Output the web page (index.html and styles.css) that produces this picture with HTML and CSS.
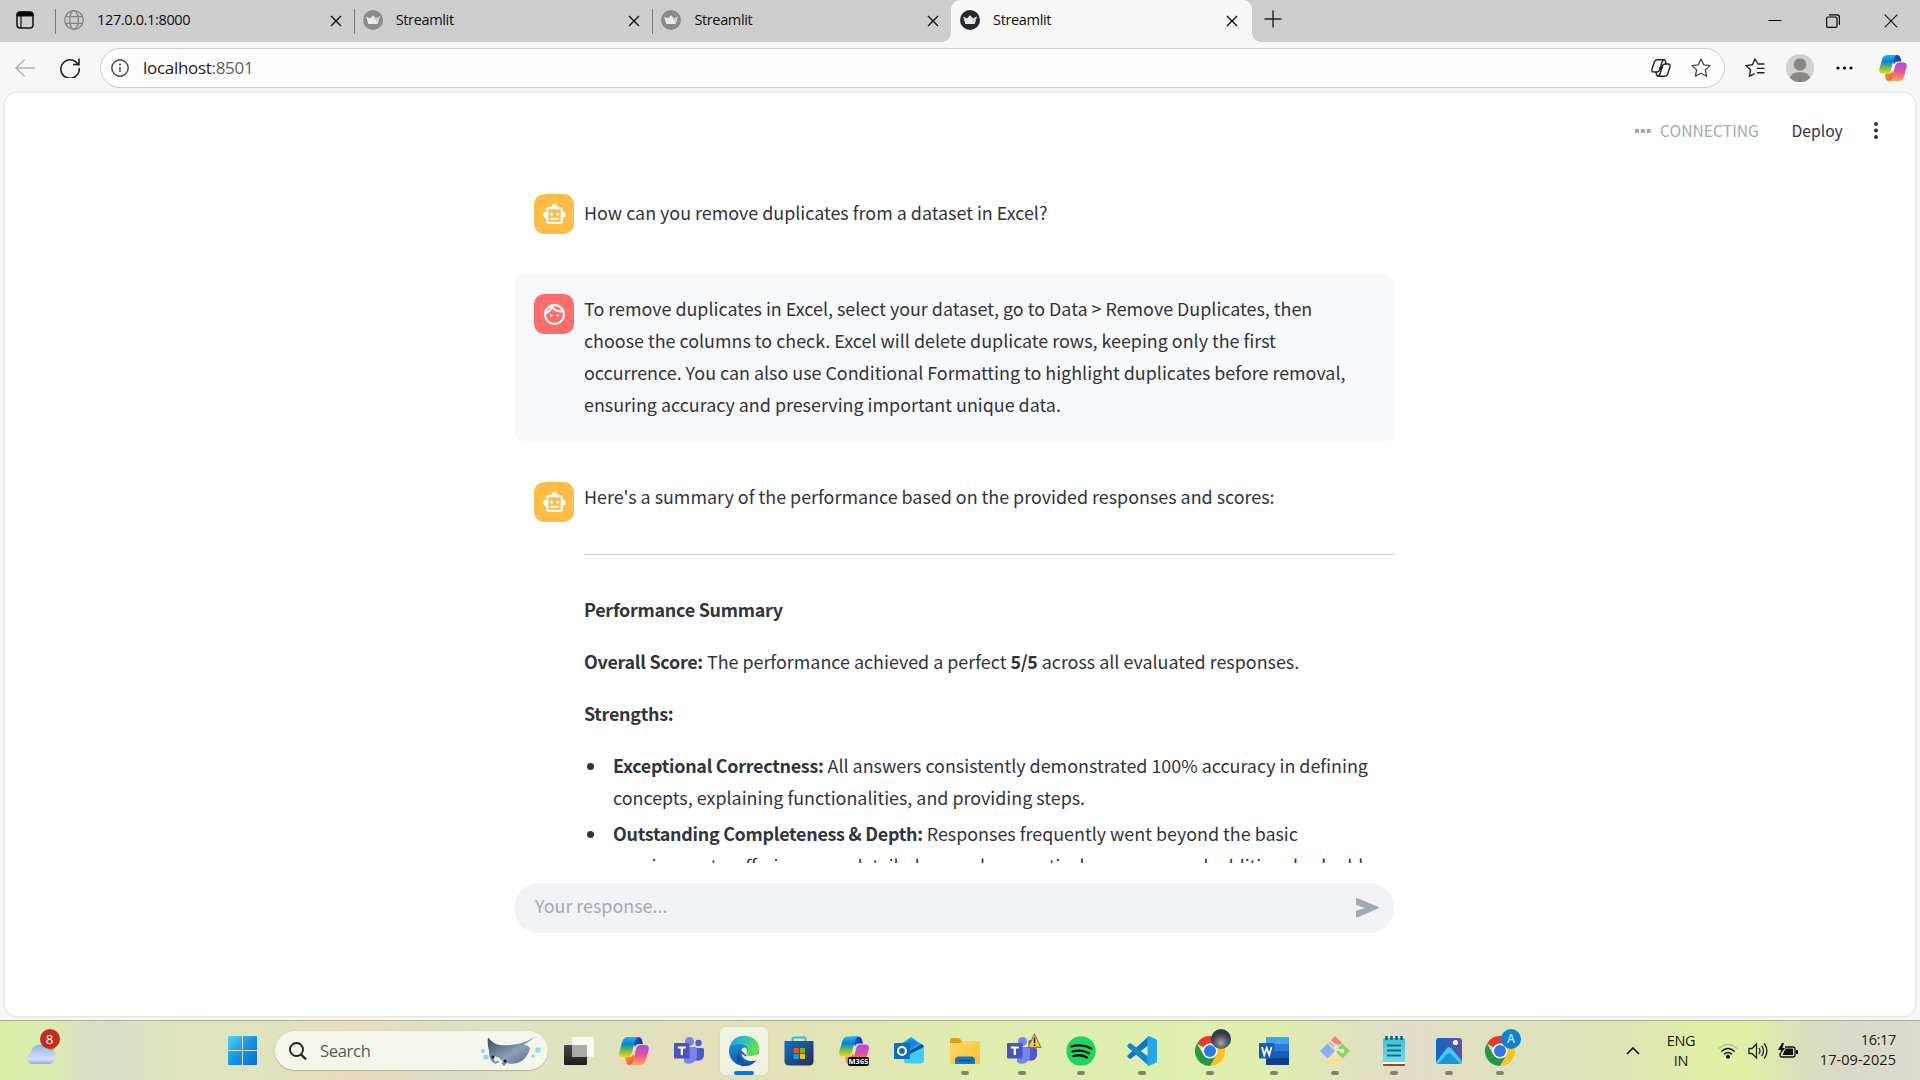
FILE: index.html
```html
<!DOCTYPE html>
<html lang="en">
<head>
<meta charset="utf-8">
<title>Streamlit</title>
<link rel="stylesheet" href="styles.css">
</head>
<body>
<svg class="defs" width="0" height="0">
  <defs>
    <linearGradient id="cpA" x1="0" y1="0" x2="0" y2="1"><stop offset="0" stop-color="#1fb5f5"/><stop offset=".35" stop-color="#0a7fd8"/><stop offset=".68" stop-color="#6fbf4a"/><stop offset="1" stop-color="#f9d11b"/></linearGradient>
    <linearGradient id="cpB" x1="0" y1="0" x2="0" y2="1"><stop offset="0" stop-color="#a34df0"/><stop offset=".5" stop-color="#ee5095"/><stop offset="1" stop-color="#ffa65c"/></linearGradient>
    <linearGradient id="cpC" x1="0" y1="0" x2="1" y2="0"><stop offset="0" stop-color="#0f6fe0"/><stop offset="1" stop-color="#1630b8"/></linearGradient>
    <linearGradient id="cpD" x1="0" y1="0" x2="1" y2="1"><stop offset="0" stop-color="#ffb02e"/><stop offset="1" stop-color="#e23a3a"/></linearGradient>
    <linearGradient id="win" x1="0" y1="0" x2="1" y2="1"><stop offset="0" stop-color="#4fd4ff"/><stop offset=".5" stop-color="#1593e6"/><stop offset="1" stop-color="#0070d2"/></linearGradient>
    <linearGradient id="edgeA" x1="0" y1="0" x2="1" y2=".5"><stop offset="0" stop-color="#2196dc"/><stop offset=".45" stop-color="#2ac0c8"/><stop offset="1" stop-color="#69e33c"/></linearGradient>
    <linearGradient id="edgeB" x1="0" y1="0" x2="0" y2="1"><stop offset="0" stop-color="#1f9de2"/><stop offset="1" stop-color="#0c5cb0"/></linearGradient>
    <linearGradient id="store" x1="0" y1="0" x2="1" y2="1"><stop offset="0" stop-color="#0b72c5"/><stop offset="1" stop-color="#2a2c57"/></linearGradient>
    <linearGradient id="folder" x1="0" y1="0" x2="1" y2="1"><stop offset="0" stop-color="#ffd96a"/><stop offset="1" stop-color="#ffc02a"/></linearGradient>
    <linearGradient id="cloud" x1="0" y1="0" x2="0" y2="1"><stop offset="0" stop-color="#8fb2ef"/><stop offset=".75" stop-color="#d3e1fa"/><stop offset="1" stop-color="#8cabe8"/></linearGradient>
    <linearGradient id="photo" x1="0" y1="0" x2="1" y2="0"><stop offset="0" stop-color="#0f67c2"/><stop offset="1" stop-color="#6050ab"/></linearGradient>
    <linearGradient id="note" x1="0" y1="0" x2="0" y2="1"><stop offset="0" stop-color="#42bfd8"/><stop offset="1" stop-color="#78dcec"/></linearGradient>
    <linearGradient id="ray" x1="0" y1="0" x2="1" y2="1"><stop offset="0" stop-color="#33455f"/><stop offset=".55" stop-color="#8ba1b3"/><stop offset="1" stop-color="#4c5280"/></linearGradient>
    <radialGradient id="user" cx=".5" cy=".7"><stop offset="0" stop-color="#b7a698"/><stop offset=".45" stop-color="#6b6d70"/><stop offset="1" stop-color="#2d3c4c"/></radialGradient>
    <linearGradient id="dark" x1="0" y1="0" x2="0" y2="1"><stop offset="0" stop-color="#4a4a48"/><stop offset="1" stop-color="#1d1d1c"/></linearGradient>
  </defs>
  <symbol id="copilot" viewBox="0 0 30 28">
    <path d="M12 0h7.500q2.500 0 3.300 2.500L24 7h-4q-3 0-4 3z" fill="url(#cpC)"/>
    <path d="M18 28h-7.500q-2.500 0-3.300-2.500L6 20h4q3 0 4-3z" fill="url(#cpD)"/>
    <path d="M9 0h11q-3 .3-4 4l-3.500 13q-1 3-4 3H4Q-1 20 .4 14.500L3.500 4Q5 0 9 0z" fill="url(#cpA)"/>
    <path d="M21 28H10q3-.3 4-4l3.500-13q1-3 4-3H26q5 0 3.600 5.500L26.500 24Q25 28 21 28z" fill="url(#cpB)"/>
  </symbol>
  <symbol id="teams" viewBox="0 0 30 28">
    <circle cx="24.500" cy="6" r="3.200" fill="#5059c9"/><path d="M20 11h8.500q1.500 0 1.500 1.500V18a6 6 0 0 1-9 5z" fill="#5059c9"/>
    <circle cx="15.500" cy="4.500" r="4.500" fill="#7b83eb"/><path d="M10 10h11.500q1.500 0 1.500 1.500V19a8 8 0 0 1-13 6z" fill="#7b83eb"/>
    <rect y="6" width="15.500" height="15.500" rx="1" fill="#4b53bc"/><path d="M3.800 9.500h8v2H9V18H6.700v-6.500H3.800z" fill="#fff"/>
  </symbol>
  <symbol id="chrome" viewBox="0 0 30 30">
    <path d="M15 15 2 7.500A15 15 0 0 1 28 7.500z" fill="#e33b2e"/><path d="M15 7.500h13A15 15 0 0 1 15 30l6.500-11z" fill="#fcc31e"/>
    <path d="M2 7.500A15 15 0 0 0 15 30l6.500-11.200L15 22l-6.500-3.200z" fill="#2a9747"/>
    <circle cx="15" cy="15" r="7.600" fill="#fff"/><circle cx="15" cy="15" r="6" fill="#2f76e8"/>
  </symbol>
  <symbol id="bot" viewBox="0 0 24 24"><path fill="#fff" fill-rule="evenodd" d="M20 9V7c0-1.100-.9-2-2-2h-3c0-1.660-1.340-3-3-3S9 3.340 9 5H6c-1.100 0-2 .9-2 2v2c-1.660 0-3 1.340-3 3s1.340 3 3 3v4c0 1.100.9 2 2 2h12c1.100 0 2-.9 2-2v-4c1.660 0 3-1.340 3-3s-1.340-3-3-3zm-2 10H6V7h12v12zM7.500 11.500a1.500 1.500 0 1 0 3 0a1.500 1.500 0 1 0-3 0zM13.500 11.500a1.500 1.500 0 1 0 3 0a1.500 1.500 0 1 0-3 0zM8 15h8v2H8z"/></symbol>
  <symbol id="crown" viewBox="0 0 20 20"><circle cx="10" cy="10" r="10"/><path d="M3.200 6.500 7 8.500l3-3.300 3 3.300 3.800-2L14.700 14H5.300z" fill="#e9e9e9"/><path d="m10 5.200 3 3.300 3.800-2L14.700 14z" fill="#cfcfcf"/></symbol>
  <symbol id="x" viewBox="0 0 12 12"><path d="m1 1 10 10M11 1 1 11" fill="none" stroke="#111" stroke-width="1.400"/></symbol>
</svg>

<header class="tabbar">
  <svg class="tab-actions" viewBox="0 0 18 18"><rect x="1" y="1" width="16" height="16" rx="3" fill="none" stroke="#111" stroke-width="1.500"/><path d="M1 5V4q0-3 3-3h10q3 0 3 3v1z" stroke="#111"/><path d="M5 5v12" stroke="#111" stroke-width="1.200"/></svg>
  <div class="tab">
    <svg class="favicon globe" viewBox="0 0 20 20"><circle cx="10" cy="10" r="9.300"/><ellipse cx="10" cy="10" rx="4.300" ry="9.300"/><path d="M1.500 6.700h17M1.500 13.300h17"/></svg>
    <span class="tab-title">127.0.0.1:8000</span><svg class="tab-x"><use href="#x"/></svg>
  </div>
  <div class="tab"><svg class="favicon faded"><use href="#crown"/></svg><span class="tab-title">Streamlit</span><svg class="tab-x"><use href="#x"/></svg></div>
  <div class="tab"><svg class="favicon faded"><use href="#crown"/></svg><span class="tab-title">Streamlit</span><svg class="tab-x"><use href="#x"/></svg></div>
  <div class="tab active"><svg class="favicon"><use href="#crown"/></svg><span class="tab-title">Streamlit</span><svg class="tab-x"><use href="#x"/></svg></div>
  <svg class="new-tab" viewBox="0 0 18 18"><path d="M9 .5v17M.5 9h17" stroke="#222" stroke-width="1.400"/></svg>
  <div class="window-buttons">
    <svg viewBox="0 0 14 14"><path d="M.5 6.500h13" stroke="#000"/></svg>
    <svg viewBox="0 0 14 14" fill="none" stroke="#000" stroke-width="1.200"><rect x=".6" y="3" width="10.400" height="10.400" rx="1.500"/><path d="M3 .8h8q2.400 0 2.400 2.400v7.500"/></svg>
    <svg viewBox="0 0 14 14"><path d="m.7.7 12.600 12.600M13.300.7.7 13.300" stroke="#111" stroke-width="1.100"/></svg>
  </div>
</header>

<nav class="toolbar">
  <svg class="back" viewBox="0 0 20 18" fill="none" stroke="#b5b5b5" stroke-width="1.400"><path d="M20 9H1M9.500.8 1 9l8.500 8.200"/></svg>
  <svg class="reload" viewBox="0 0 20 20" fill="none" stroke="#222" stroke-width="1.600"><path d="M18.600 7.600A9.200 9.200 0 1 0 19.200 10M19 .5v6h-6"/></svg>
  <div class="address">
    <svg class="info" viewBox="0 0 18 18"><circle cx="9" cy="9" r="8.200" fill="none" stroke="#444" stroke-width="1.400"/><path d="M9 8v5" stroke="#444" stroke-width="1.400"/><circle cx="9" cy="5.500" r="1" fill="#444"/></svg>
    <span class="url">localhost<span class="port">:8501</span></span>
    <svg class="split" viewBox="0 0 20 18" fill="none" stroke="#222" stroke-width="1.400"><path d="M6 .8h6.500q1.600 0 2 1.700l.6 2.500M14 17.200H7.500q-1.600 0-2-1.700L5 13M6 .8Q4 .8 3.300 3L1 10.300Q.3 13 3 13h3q2 0 2.700-2.300L11 3q.6-2.200 2.500-2.200M14 17.200q2 0 2.700-2.200L19 7.700Q19.700 5 17 5h-3q-2 0-2.700 2.300L9 15q-.6 2.200-2.500 2.200M8 8.800h4"/></svg>
    <svg class="star" viewBox="0 0 20 20" fill="none" stroke="#444" stroke-width="1.300" stroke-linejoin="round"><path d="m10 1 2.700 5.800 6.300.8-4.600 4.300 1.200 6.400L10 15.200l-5.600 3.100 1.200-6.400L1 7.600l6.300-.8z"/></svg>
  </div>
  <svg class="favs" viewBox="0 0 20 20" fill="none" stroke="#222" stroke-width="1.400" stroke-linejoin="round" stroke-linecap="round"><path d="M19 6h-6L10 1 7.400 6.800 1 7.600l4.600 4.300-1.200 6.400L9 15.800M12.500 10.400H19M12.500 14.800H19"/></svg>
  <svg class="profile" viewBox="0 0 28 28"><circle cx="14" cy="14" r="14" fill="#d2d0ce"/><circle cx="14" cy="10.500" r="6.200" fill="#8a8684"/><path d="M4 24q1-6 10-6t10 6a14 14 0 0 1-20 0z" fill="#8a8684"/></svg>
  <svg class="more" viewBox="0 0 17 4"><circle cx="2" cy="2" r="1.600"/><circle cx="8.500" cy="2" r="1.600"/><circle cx="15" cy="2" r="1.600"/></svg>
  <svg class="sidebar-copilot"><use href="#copilot"/></svg>
</nav>

<main class="page">
  <div class="status">
    <svg class="squares" viewBox="0 0 16 4"><path d="M0 0h4v4H0zM5.800 0h4v4h-4zM11.600 0h4v4h-4z" fill="#a3a8b8"/></svg>
    <span class="connecting">CONNECTING</span>
    <span class="deploy">Deploy</span>
    <svg class="kebab" viewBox="0 0 4 17" fill="#31333f"><circle cx="2" cy="2" r="2"/><circle cx="2" cy="8.500" r="2"/><circle cx="2" cy="15" r="2"/></svg>
  </div>
  <section class="chat">
    <article class="message centered">
      <div class="avatar bot"><svg><use href="#bot"/></svg></div>
      <p>How can you remove duplicates from a dataset in Excel?</p>
    </article>
    <article class="message user">
      <div class="avatar face"><svg viewBox="0 0 24 24" fill="#fff" fill-rule="evenodd"><path d="M10.250 13c0 .69-.56 1.250-1.250 1.250S7.750 13.690 7.750 13s.56-1.250 1.250-1.250 1.250.56 1.250 1.250zM15 11.750c-.69 0-1.250.56-1.250 1.250s.56 1.250 1.250 1.250 1.250-.56 1.250-1.250-.56-1.250-1.250-1.250zm7 .25c0 5.520-4.480 10-10 10S2 17.520 2 12 6.480 2 12 2s10 4.480 10 10zM10.660 4.120C12.060 6.440 14.600 8 17.500 8c.46 0 .91-.05 1.340-.12C17.440 5.560 14.900 4 12 4c-.46 0-.91.05-1.340.12zM4.420 9.470c1.710-.97 3.030-2.550 3.660-4.440C6.370 6 5.050 7.580 4.420 9.470zM20 12c0-.78-.12-1.530-.33-2.240-.7.15-1.420.24-2.170.24-3.130 0-5.920-1.440-7.760-3.690C8.690 8.870 6.600 10.880 4 11.860c.01.04 0 .09 0 .14 0 4.420 3.580 8 8 8s8-3.580 8-8z"/></svg></div>
      <p>To remove duplicates in Excel, select your dataset, go to Data &gt; Remove Duplicates, then<br>choose the columns to check. Excel will delete duplicate rows, keeping only the first<br>occurrence. You can also use Conditional Formatting to highlight duplicates before removal,<br>ensuring accuracy and preserving important unique data.</p>
    </article>
    <article class="message summary">
      <div class="avatar bot"><svg><use href="#bot"/></svg></div>
      <div class="answer">
        <p>Here's a summary of the performance based on the provided responses and scores:</p>
        <hr>
        <p><b>Performance Summary</b></p>
        <p><b>Overall Score:</b> The performance achieved a perfect <b>5/5</b> across all evaluated responses.</p>
        <p><b>Strengths:</b></p>
        <ul>
          <li><b>Exceptional Correctness:</b> All answers consistently demonstrated 100% accuracy in defining<br>concepts, explaining functionalities, and providing steps.</li>
          <li><b>Outstanding Completeness &amp; Depth:</b> Responses frequently went beyond the basic<br>requirements, offering more detailed examples, practical use cases, and additional valuable</li>
        </ul>
      </div>
    </article>
  </section>
  <div class="chat-input">
    <span>Your response...</span>
    <svg viewBox="0 0 23 20"><path d="M1.600.3 22 8.800q1.600.9 0 1.800L1.600 19.500Q0 20 0 18.300v-5.500l9-2.900L0 7V1.500Q0-.3 1.600.3z" fill="#a3a8b8"/></svg>
  </div>
</main>

<footer class="taskbar">
  <div class="weather">
    <svg viewBox="0 0 30 30"><circle cx="22" cy="13" r="6.500" fill="#ff8a1e"/><path d="M6 30a6 6 0 0 1-1-11.500 9 9 0 0 1 17-3A7.200 7.200 0 0 1 23.500 30z" fill="url(#cloud)"/></svg>
    <span class="badge">8</span>
  </div>
  <svg class="start" viewBox="0 0 29 29"><path d="M1 0h13v14H0V1q0-1 1-1zM15 0h13q1 0 1 1v13H15zM0 15h14v14H1q-1 0-1-1zM15 15h14v13q0 1-1 1H15z" fill="url(#win)"/></svg>
  <div class="search">
    <svg class="lens" viewBox="0 0 18 18"><circle cx="7.500" cy="7.500" r="6.500" fill="none" stroke="#222" stroke-width="1.900"/><path d="m12 12.500 5 4.800" stroke="#222" stroke-width="2.300"/></svg>
    <span>Search</span>
    <svg class="manta" viewBox="0 0 60 30"><g fill="#8fd6f5"><circle cx="2" cy="15" r="2"/><circle cx="5" cy="21" r="2.600"/><circle cx="57" cy="14" r="2.800"/><circle cx="52" cy="20" r="1.800"/></g><path d="M7 1.500q5 6.500 12 7.500 9 1 17-1 10-1.500 18.500-8-6 6-11.500 8.500 4 .5 6 4-3 10-10 13.500-6 3-13 1l-3 3-4-4-5 2q-6-3-6-13-2-8-1-13.500z" fill="url(#ray)"/><path d="M12 20q6 0 10 6l-3 2-2-4-3 2z" fill="#e7edf0"/><circle cx="12" cy="21" r="1.500" fill="#10182a"/><circle cx="24" cy="25" r="1.500" fill="#10182a"/></svg>
  </div>
  <div class="apps">
    <div class="app"><svg viewBox="0 0 30 28"><rect y="8" width="23" height="20" rx="1" fill="url(#dark)"/><rect x="8" y="0" width="22" height="20" rx="1" fill="#fff" opacity=".82"/><path d="M8 8h15v12H8z" fill="#aaa"/></svg></div>
    <div class="app"><svg><use href="#copilot"/></svg></div>
    <div class="app"><svg><use href="#teams"/></svg></div>
    <div class="app current"><svg viewBox="0 0 30 30"><circle cx="15" cy="15" r="15" fill="url(#edgeB)"/><path d="M.7 11Q4 0 15 0q15 1 15 13 0 7-9 7-4 0-3-3 2-6-3-8Q7 6 .7 11z" fill="url(#edgeA)"/><path d="M11 13q-4 14 16 11.500Q22 31 13 30 3 24 11 13z" fill="#1155a3"/><path d="M12 15q1-4 4-3.500 3 1 1.800 5-.8 3.500 4.200 3.500 4 0 8.300-3-1 6-4 8Q12 26 12 15z" fill="#eeefdf"/><path d="M18.500 20.500q-5-1-6.500-4 .5 9 10 9 3.500 0 5.500-1.500l-1.500 2q-6 3-11 0-6-4-3-12z" fill="#0f65b8"/></svg></div>
    <div class="app"><svg viewBox="0 0 30 30"><path d="M8.500 7V3.500Q8.500 1.500 10 1.500h10q1.500 0 1.500 2V7" fill="none" stroke="#26bfe9" stroke-width="2"/><path d="M.5 5h29v20q0 4.500-4.500 4.500H5Q.5 29.500.5 25z" fill="url(#store)"/><path d="M9.500 12H15v5H9.500z" fill="#f25022"/><path d="M16 12h5v5h-5z" fill="#7fba00"/><path d="M9.500 18H15v5H9.500z" fill="#00a4ef"/><path d="M16 18h5v5h-5z" fill="#ffb900"/></svg></div>
    <div class="app"><svg><use href="#copilot"/></svg><span class="m365">M365</span></div>
    <div class="app"><svg viewBox="0 0 30 28"><path d="m4 9 13-9 13 9-4 8H6z" fill="#1da0e8"/><path d="M8 8 18 2l6 4-12 9z" fill="#1583d8"/><path d="m12 16 16-9 2 3-8 8z" fill="#0b4f9e"/><path d="m30 10v13q0 3.500-3.500 3.500H13q-3 0-3-3V20z" fill="#3fcdf5"/><rect y="6" width="16" height="16" rx="1" fill="#0f6cc0"/><circle cx="8" cy="14" r="4" fill="none" stroke="#fff" stroke-width="2.200"/></svg></div>
    <div class="app open"><svg viewBox="0 0 30 28"><path d="M0 2.500Q0 1 1.500 1H9l3 3v5H0z" fill="#e4a00e"/><path d="M1.500 6H10l3-2h15.500Q30 4 30 5.500V27H0V7q0-1 1.500-1z" fill="url(#folder)"/><path d="M5 27v-4q0-3.500 3.500-3.500h13q3.500 0 3.500 3.500v4z" fill="#1277cd"/><path d="M8.500 23.500h13" stroke="#07539a" stroke-width="1.500"/></svg></div>
    <div class="app open"><svg><use href="#teams"/></svg><svg class="warn" viewBox="0 0 14 15"><path d="m7 1 6 12.500H1z" fill="#ffd42e" stroke="#807848" stroke-linejoin="round"/><path d="M7 4.500v5M7 10.500v1.700" stroke="#222" stroke-width="1.500"/></svg></div>
    <div class="app open"><svg viewBox="0 0 30 30"><circle cx="15" cy="15" r="14.700" fill="#1ed760"/><path d="M5.500 10.500q10-3 20 2M6.500 15.500q9-2.500 16.500 1.700M7.500 20q7.500-2 13.500 1.500" fill="none" stroke="#111" stroke-width="2.300" stroke-linecap="round"/></svg></div>
    <div class="app open"><svg viewBox="0 0 30 30"><path d="M22 0 1 19l-1 1.200L2 22.500l1.800.2L23 8z" fill="#0f76bc"/><path d="M22 30 1 11.500l-1-1.800L2 7.500l1.800-.2L23 22z" fill="#1488cd"/><path d="m22 0 7 3.300q1 .5 1 1.700v20q0 1.200-1 1.700L22 30q-1 0-1.500-1V1q.5-1 1.500-1z" fill="#24a7f1"/></svg></div>
    <div class="app open"><svg><use href="#chrome"/></svg><svg class="user" viewBox="0 0 20 20"><circle cx="10" cy="10" r="10" fill="url(#user)"/></svg></div>
    <div class="app open"><svg viewBox="0 0 30 28"><rect x="7" width="23" height="28" rx="1.500" fill="#2b7cd3"/><path d="M7 0h23v7H7z" fill="#41a5ee"/><path d="M7 14h23v7H7z" fill="#185abd"/><path d="M7 21h23v7H7z" fill="#103f91"/><rect y="6" width="15.500" height="15.500" rx="1" fill="#185abd"/><path d="m3 10 2.200 8 2.500-7 2.500 7L12.500 10" fill="none" stroke="#fff" stroke-width="1.800"/></svg></div>
    <div class="app open"><svg viewBox="0 0 30 30"><path d="m15 0 7 7-7 5-6.500-5.500z" fill="#f98080"/><path d="m0 15 7.500-7.500L15 15l-7.500 7.500z" fill="#80b0ff"/><path d="m22.500 7.500 7.500 7.500-7.500 7.500L15 15z" fill="#8cd360"/><path d="m15 16 7 6.500-7 7.500-7-7z" fill="#ffe07c"/><path d="m9 4 7 6v12m0-9 6 2" fill="none" stroke="#e8e6d5" stroke-width="2"/><circle cx="16" cy="10" r="2.300" fill="#e8e6d5"/><circle cx="16" cy="21" r="2.300" fill="#e8e6d5"/><circle cx="22" cy="15" r="2.300" fill="#e8e6d5"/></svg></div>
    <div class="app open"><svg viewBox="0 0 30 30"><rect x="4" y="2" width="22" height="26" rx="1.500" fill="url(#note)"/><path d="M4 26h22v3q0 1-1 1H5q-1 0-1-1z" fill="#fff"/><path d="M4 28h22v1q0 1-1 1H5q-1 0-1-1z" fill="#a14a08"/><path d="M7.500 0v4M12.500 0v4M17.500 0v4M22.500 0v4" stroke="#175d70" stroke-width="2.500"/><path d="M8 9.500h14M8 14.500h14M8 19.500h14" stroke="#0b718c" stroke-width="1.800"/></svg></div>
    <div class="app open"><svg viewBox="0 0 30 30"><rect x="2" y="2" width="26" height="26" rx="3" fill="url(#photo)"/><path d="m2 26 11-14q2-2 4 0l11 13q0 3-3 3H5q-2 0-3-2z" fill="#42caf4"/><path d="m4 28 9-10q2-2 4 0l9 9.500-1 .5z" fill="#1597dd"/><circle cx="21.500" cy="6.500" r="2.600" fill="#fff"/></svg></div>
    <div class="app open"><svg><use href="#chrome"/></svg><span class="user initial">A</span></div>
  </div>
  <div class="tray">
    <svg class="chevron" viewBox="0 0 14 8"><path d="m1 7 6-6 6 6" fill="none" stroke="#111" stroke-width="1.600"/></svg>
    <div class="lang">ENG<br>IN</div>
    <svg class="wifi" viewBox="0 0 20 16" fill="none" stroke="#111" stroke-width="1.500"><path d="M1 5.500q9-8 18 0" stroke="#b3bc8b"/><path d="M3.300 8.500q6.700-6 13.400 0M6 11.300q4-3.500 8 0"/><circle cx="10" cy="13.800" r="1.300" fill="#111"/></svg>
    <svg class="volume" viewBox="0 0 20 18" fill="none" stroke="#222" stroke-width="1.300"><path d="M1 6.500h3L8.500 2v14L4 11.500H1zM11 6q2 3 0 6M13.700 3.800q3.600 5.200 0 10.400M16.200 1.500q5.400 7.500 0 15"/></svg>
    <svg class="battery" viewBox="0 0 20 18"><path d="M7 5h8q2 0 2 2v6q0 2-2 2H4q-2 0-2-2v-2" fill="none" stroke="#111" stroke-width="1.300"/><path d="M7.500 6.500H15V13H4.500zM18 8h2v4h-2zM4 1 0 8h3l-1 5 5-7H4.500L6 1z" fill="#111"/></svg>
    <div class="clock">16:17<br><span class="date">17-09-2025</span></div>
  </div>
</footer>
</body>
</html>
```
FILE: styles.css
```css
* { box-sizing: border-box; }
body {
  margin: 0; width: 1920px; height: 1080px; overflow: hidden;
  display: flex; flex-direction: column; background: #f7f7f7;
  font-family: "Open Sans", "Noto Sans", sans-serif; color: #111;
}
svg { display: block; flex: none; }
.defs { position: absolute; }
p, ul { margin: 0; padding: 0; }

/* Browser tabs */
.tabbar { height: 42px; flex: none; display: flex; align-items: center; background: #cdcdcd; }
.tab-actions { width: 18px; height: 18px; margin: 0 22px 2px 16px; }
.tab { width: 298.700px; height: 42px; padding: 0 12px 2px 8px; display: flex; align-items: center; position: relative; }
.tab:not(.active)::before { content: ""; position: absolute; left: -1px; top: 9px; width: 1px; height: 25px; background: #777; }
.favicon { width: 20px; height: 20px; fill: #262730; }
.globe { fill: none; stroke: #838383; stroke-width: 1.300; }
.faded { fill: #8a8a8e; }
.tab-title { flex: 1; margin-left: 13px; font-size: 14.500px; letter-spacing: -.35px; line-height: 20px; padding-bottom: 1px; }
.tab-x { width: 12px; height: 12px; margin: 2px 1px 0 0; }
.tab.active { width: 301px; padding: 0 13.500px 2px 9px; background: #f7f7f7; border-radius: 9px 9px 0 0; margin-left: -1px; }
.tab.active::before, .tab.active::after { content: ""; position: absolute; bottom: 0; width: 9px; height: 9px; }
.tab.active::before { left: -9px; background: radial-gradient(circle at 0 0, #cdcdcd 8.500px, #f7f7f7 9px); }
.tab.active::after { right: -9px; background: radial-gradient(circle at 100% 0, #cdcdcd 8.500px, #f7f7f7 9px); }
.new-tab { width: 18px; height: 18px; margin: 0 0 4px 12px; }
.window-buttons { display: flex; gap: 44px; margin-left: auto; padding-right: 22px; }
.window-buttons svg { width: 14px; height: 14px; }

/* Browser toolbar */
.toolbar { height: 51px; flex: none; display: flex; align-items: center; padding: 1px 13px 0 15px; }
.back { width: 20px; height: 18px; }
.reload { width: 20px; height: 20px; margin: 0 20px 0 25px; }
.address { width: 1625px; height: 40px; display: flex; align-items: center; background: #fdfdfd; border: 1px solid #ccc; border-radius: 20px; padding: 0 13px 0 10px; }
.info { width: 18px; height: 18px; }
.url { flex: 1; margin-left: 14px; font-size: 17px; letter-spacing: -.3px; line-height: 24px; color: #1b1b1b; }
.port { color: #606060; }
.split { width: 20px; height: 18px; margin-right: 20px; }
.star { width: 20px; height: 20px; }
.favs { width: 20px; height: 20px; margin-left: 20px; }
.profile { width: 28px; height: 28px; margin-left: 21px; }
.more { width: 17px; height: 4px; margin-left: 22px; }
.sidebar-copilot { width: 28px; height: 26px; margin-left: 26px; }

/* Streamlit page */
.page {
  height: 923px; flex: none; margin: 0 5px; padding-right: 12px; background: #fff; border-radius: 12px;
  box-shadow: 0 0 0 1px #e6e6e6, 0 0 3px #ccc;
  font-family: "Noto Sans CJK SC", sans-serif; color: #31333f;
  display: flex; flex-direction: column; align-items: center;
}
.status { height: 81px; flex: none; align-self: stretch; display: flex; align-items: center; justify-content: flex-end; padding: 0 25.500px 6px 0; font-size: 15.700px; line-height: 24px; }
.squares { width: 16px; height: 4px; margin-right: 9px; }
.connecting { width: 131.500px; color: #a3a8b8; }
.deploy { width: 82px; padding-top: 1px; }
.kebab { width: 4px; height: 17px; }
.chat { width: 880px; height: 689px; flex: none; overflow: hidden; display: flex; flex-direction: column; gap: 20px; font-size: 17.900px; line-height: 32px; }
.message { flex: none; display: flex; gap: 10px; padding: 20px 0 20px 20px; border-radius: 10px; white-space: nowrap; }
.centered { align-items: center; }
.centered p { padding-bottom: 4px; }
.user.message { background: #f8f9fb; }
.user p { margin: -2px 0 2px; }
.avatar { width: 40px; height: 40px; flex: none; border-radius: 10px; display: grid; place-items: center; }
.avatar svg { width: 25px; height: 25px; }
.avatar.bot { background: #ffbd45; }
.avatar.face { background: #ff6c6c; }
.answer { flex: 1; margin-top: -2px; }
.answer p { margin-bottom: 20px; }
.answer b { font-weight: 700; letter-spacing: -.26px; }
.answer hr { margin: 42px 0 38px; border: 0; height: 1px; background: #d3d3d6; }
.answer ul { list-style: none; }
.answer li { padding-left: 29px; margin-bottom: 4px; position: relative; }
.answer li::before { content: ""; position: absolute; left: 3px; top: 14px; width: 7px; height: 7px; border-radius: 50%; background: #31333f; }
.chat-input { width: 880px; height: 50px; margin-top: 20px; padding: 0 15px 0 21px; display: flex; align-items: center; justify-content: space-between; background: #f0f2f6; border-radius: 25px; font-size: 17.900px; color: #a5a8b2; }
.chat-input span { padding-bottom: 6px; }
.chat-input svg { width: 23px; height: 20px; }

/* Windows taskbar */
.taskbar {
  height: 60px; flex: none; margin-top: 4px; border-top: 1px solid #acae91; display: flex; align-items: center;
  background: linear-gradient(90deg, #d9eda5 0, #dbecae 50px, #d8e0c3 85px, #d9dfc7 120px, #dfe4bc 180px, #dfe3bf 260px, #e6dcbc 350px, #dcddca 450px, #e0e2bf 540px, #e2e0ba 720px, #e0e6b2 880px, #deecb0 960px, #dfefad 1200px, #dfedae 1270px, #e1dcc8 1400px, #e1dfc3 1460px, #dde2bd 1530px, #e0e4b4 1630px, #dfefa6 1700px, #dff0a6 1750px, #dadfbe 1800px, #d9dacb 1850px, #dedad0 1920px);
}
.weather { width: 34px; height: 40px; margin: 0 168px 4px 26px; position: relative; }
.weather svg { width: 30px; height: 30px; margin-top: 5px; }
.badge { position: absolute; left: 13.500px; top: 0; width: 20px; height: 20px; border-radius: 50%; background: #c42b1c; color: #fff; font-size: 13.500px; line-height: 20px; text-align: center; }
.start { width: 29px; height: 29px; }
.search { width: 273px; height: 39px; margin-left: 18px; padding: 0 7px 0 14px; display: flex; align-items: center; background: #f4f5ec; border-radius: 20px; box-shadow: 0 1px 1px #b5b598, 0 0 1px #b5b598; color: #5b5b57; }
.lens { width: 18px; height: 18px; }
.search span { flex: 1; margin-left: 13px; font-size: 16.500px; letter-spacing: -.3px; }
.manta { width: 60px; height: 30px; }
.apps { display: flex; gap: 7px; margin-left: 7px; }
.app { width: 48px; height: 48px; display: grid; place-items: center; position: relative; border-radius: 5px; }
.app > svg { width: 30px; height: 30px; }
.app:nth-child(6) > svg { width: 30px; height: 29px; }
.app:nth-child(8) { margin-left: 1px; }
.app:nth-child(9) { margin-left: 2px; }
.app:nth-child(10) { margin-left: 3.500px; }
.app:nth-child(11) { margin-left: 6.500px; }
.app:nth-child(12) { margin-left: 13px; }
.app:nth-child(13) { margin-left: 9px; }
.app:nth-child(14) { margin-left: 6px; }
.app:nth-child(15) { margin-left: 3.500px; }
.app:nth-child(17) { margin-left: -3.500px; }
.current { background: #f0f1e0; box-shadow: 0 0 1px #b9ba9c; }
.current::after, .open::after { content: ""; position: absolute; left: 20px; bottom: 0; width: 8px; height: 4px; border-radius: 2px; background: #83836c; }
.current::after { left: 14px; width: 20px; background: #0a78d4; }
.m365 { position: absolute; left: 18px; top: 30px; width: 21px; height: 9px; border-radius: 2px; background: #000; color: #fff; font: 700 7.500px/9px "Open Sans", sans-serif; text-align: center; }
.app > .warn { position: absolute; left: 29px; top: 6px; width: 15px; height: 16px; }
.app > .user { position: absolute; left: 25px; top: 2px; width: 20px; height: 20px; }
.initial { border-radius: 50%; background: #0b84d0; color: #b9e4fa; font-size: 12px; font-weight: 600; line-height: 20px; text-align: center; }
.tray { margin-left: auto; padding-right: 24px; display: flex; align-items: center; font-size: 14.500px; letter-spacing: -.35px; line-height: 20px; color: #1b1b14; }
.chevron { width: 14px; height: 8px; }
.lang { width: 30px; margin-left: 26px; text-align: center; }
.wifi { width: 20px; height: 16px; margin-left: 22px; }
.volume { width: 20px; height: 18px; margin-left: 10px; }
.battery { width: 20px; height: 18px; margin-left: 10px; }
.clock { width: 82px; margin-left: 16px; padding-bottom: 2px; text-align: right; }
.date { letter-spacing: .05px; }
```
